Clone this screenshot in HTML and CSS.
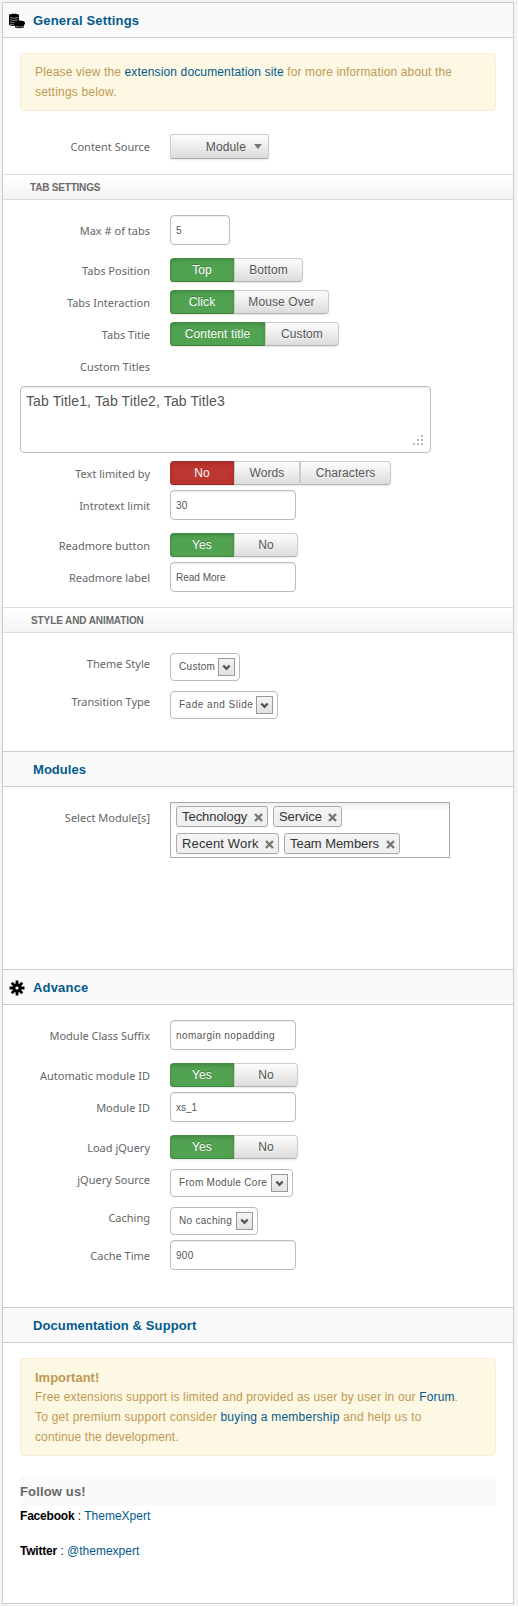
FILE: index.html
```html
<!DOCTYPE html>
<html lang="en">
<head>
<meta charset="utf-8">
<title>Module Settings</title>
<link rel="stylesheet" href="styles.css">
</head>
<body>
<svg class="defs" width="0" height="0">
  <symbol id="arrow" viewBox="0 0 15 16"><path d="M4.300 6.500l3.200 3.300 3.200-3.300" fill="none" stroke="#555" stroke-width="2.300"/></symbol>
  <symbol id="cross" viewBox="0 0 9 9"><path d="M1 1l7 7M8 1L1 8" fill="none" stroke="#777" stroke-width="2.400"/></symbol>
</svg>
<main class="panel">
  <h3 class="head">
    <svg class="head-icon" viewBox="0 0 16 16"><path d="M0 2.200C0 .2 10 .2 10 2.200V8Q6 8.600 5.500 10.500V13C2 13 0 12.300 0 11.500z"/><path d="M6 9.500Q7 7.500 11 7.500T16 9.500V11.500H15V14.500Q10.500 16 6 14.500V13L5 12V10.500z"/><path d="M1 4.500q3.500 1.500 8.500 0M1 6.800q3.500 1.300 8 0M1 9q2.500 1 4.500.5M1 11.200q2.500 1 4 .3M6.500 13.300q4.500 1.500 8.500 0" fill="none" stroke="#aaa" stroke-width=".8"/></svg>
    <span class="t-general">General Settings</span>
  </h3>
  <section class="body body-general">
    <div class="alert"><p class="a1">Please view the <a>extension documentation site</a> for more information about the</p><p class="a2">settings below.</p></div>
    <div class="row row-source"><label>Content Source</label><div class="drop"><span>Module</span><i class="caret"></i></div></div>
  </section>
  <h4 class="sub sub-tab"><span>TAB SETTINGS</span></h4>
  <section class="body body-tabs">
    <div class="row row-input"><label>Max # of tabs</label><div class="input small">5</div></div>
    <div class="row row-btn"><label>Tabs Position</label><div class="group"><b class="btn on">Top</b><b class="btn w69">Bottom</b></div></div>
    <div class="row row-btn"><label>Tabs Interaction</label><div class="group"><b class="btn on">Click</b><b class="btn w95">Mouse Over</b></div></div>
    <div class="row row-btn"><label>Tabs Title</label><div class="group"><b class="btn on w95">Content title</b><b class="btn w74">Custom</b></div></div>
    <div class="row row-btn"><label>Custom Titles</label></div>
    <div class="area"><span>Tab Title1, Tab Title2, Tab Title3</span>
      <svg class="grip" viewBox="0 0 10 10"><path d="M8 0h2v2H8zM4 4h2v2H4zM8 4h2v2H8zM0 8h2v2H0zM4 8h2v2H4zM8 8h2v2H8z" fill="#b5b5b5"/></svg></div>
    <div class="row row-btn"><label>Text limited by</label><div class="group"><b class="btn off">No</b><b class="btn w66">Words</b><b class="btn w91">Characters</b></div></div>
    <div class="row row-input"><label>Introtext limit</label><div class="input">30</div></div>
    <div class="row row-btn"><label>Readmore button</label><div class="group"><b class="btn on">Yes</b><b class="btn">No</b></div></div>
    <div class="row row-input"><label>Readmore label</label><div class="input t-read">Read More</div></div>
  </section>
  <h4 class="sub sub-style"><span>STYLE AND ANIMATION</span></h4>
  <section class="body body-style">
    <div class="row row-select"><label>Theme Style</label><div class="select"><span>Custom</span><svg><use href="#arrow"/></svg></div></div>
    <div class="row row-select"><label>Transition Type</label><div class="select w108 t-fade"><span>Fade and Slide</span><svg><use href="#arrow"/></svg></div></div>
  </section>
  <h3 class="head line"><span class="t-modules">Modules</span></h3>
  <section class="body body-modules">
    <div class="row row-input"><label class="l-select">Select Module[s]</label>
      <div class="chosen">
        <span class="chip w92"><span>Technology</span><svg><use href="#cross"/></svg></span>
        <span class="chip w69"><span>Service</span><svg><use href="#cross"/></svg></span>
        <span class="chip w103"><span class="t-recent">Recent Work</span><svg><use href="#cross"/></svg></span>
        <span class="chip w116"><span>Team Members</span><svg><use href="#cross"/></svg></span>
      </div></div>
  </section>
  <h3 class="head line">
    <svg class="head-icon" viewBox="0 0 16 16"><path d="M8 .5v15M.5 8h15M2.700 2.700l10.600 10.600M13.300 2.700L2.700 13.300" stroke="#000" stroke-width="2.800"/><circle cx="8" cy="8" r="4.500"/><circle cx="8" cy="8" r="1.600" fill="#fafafa"/></svg>
    <span class="t-advance">Advance</span>
  </h3>
  <section class="body body-advance">
    <div class="row row-input"><label>Module Class Suffix</label><div class="input t-suffix">nomargin nopadding</div></div>
    <div class="row row-btn"><label>Automatic module ID</label><div class="group"><b class="btn on">Yes</b><b class="btn">No</b></div></div>
    <div class="row row-input"><label>Module ID</label><div class="input t-read">xs_1</div></div>
    <div class="row row-btn"><label>Load jQuery</label><div class="group"><b class="btn on">Yes</b><b class="btn">No</b></div></div>
    <div class="row row-select"><label>jQuery Source</label><div class="select w123"><span>From Module Core</span><svg><use href="#arrow"/></svg></div></div>
    <div class="row row-select"><label>Caching</label><div class="select w88"><span>No caching</span><svg><use href="#arrow"/></svg></div></div>
    <div class="row row-input"><label>Cache Time</label><div class="input">900</div></div>
  </section>
  <h3 class="head line"><span class="t-doc">Documentation &amp; Support</span></h3>
  <section class="body body-doc">
    <div class="alert alert-doc"><h5>Important!</h5><p class="a3">Free extensions support is limited and provided as user by user in our <a>Forum</a>.</p><p class="a4">To get premium support consider <a>buying a membership</a> and help us to</p><p class="a5">continue the development.</p></div>
    <h4 class="follow">Follow us!</h4>
    <p class="social"><strong>Facebook</strong> : <a>ThemeXpert</a></p>
    <p class="social"><strong>Twitter</strong> : <a>@themexpert</a></p>
  </section>
</main>
</body>
</html>
```
FILE: styles.css
```css
* { box-sizing: border-box; }
body { margin: 0; padding: 2px 4px 2px 2px; height: 1606px; background: #f4f4f4; font: 12px/20px "Liberation Sans", Arial, sans-serif; color: #555; white-space: nowrap; }
h3, h4, h5, p { margin: 0; }
.defs { display: block; height: 0; }
.panel { width: 512px; height: 1602px; border: 1px solid #ccc; background: #fff; }
.head { display: flex; position: relative; align-items: center; height: 35px; padding: 2px 0 0 30px; border-bottom: 1px solid #ccc; background: #fafafa; color: #025a8d; font-size: 13px; letter-spacing: .18px; }
.head.line { height: 36px; border-top: 1px solid #ccc; }
.head-icon { position: absolute; left: 6px; top: 10px; width: 16px; height: 16px; }
.t-modules { letter-spacing: .05px; }
.t-doc { letter-spacing: .1px; }
.body { padding: 0 17px; }
.body-general { height: 136px; padding-top: 15px; }
.body-tabs { height: 407px; padding-top: 15px; }
.body-style { height: 118px; padding-top: 15px; }
.body-modules { height: 182px; padding-top: 15px; }
.body-advance { height: 302px; padding-top: 15px; }
.body-doc { padding-top: 15px; }
.alert { height: 58px; padding: 8px 14px; border: 1px solid #fbeed5; border-radius: 4px; background: #fcf8e3; color: #c09853; }
.alert a { color: #025a8d; }
.a1 { letter-spacing: .135px; }
.a2 { letter-spacing: .2px; }
.a3 { letter-spacing: .15px; }
.a4 { letter-spacing: .23px; }
.a5 { letter-spacing: .12px; }
.alert-doc { height: 98px; }
.alert-doc h5 { font-size: 13px; line-height: 21px; margin-bottom: -1px; }
.row { display: grid; grid-template-columns: 130px 1fr; column-gap: 20px; align-items: start; }
.row label { text-align: right; font: 11px/20px "Noto Sans", "Open Sans", sans-serif; color: #666; }
.row-source { margin-top: 23px; }
.row-source label { padding-top: 3px; }
.row-input { margin-bottom: 10px; }
.row-input label { padding-top: 6px; }
.row-btn { padding: 3px 0 5px; }
.row-btn label { height: 24px; padding-top: 3px; }
.row-select { padding: 5px 0; }
.row-select label { padding-top: 1px; }
.drop { display: flex; align-items: center; justify-content: flex-end; gap: 8px; width: 99px; height: 25px; padding-right: 6px; border: 1px solid #ccc; border-bottom-color: #aaa; border-radius: 2px; background: linear-gradient(#fdfdfd, #dcdcdc); box-shadow: 0 1px 2px rgba(0,0,0,.1); letter-spacing: .15px; }
.caret { border: 4px solid transparent; border-top: 5px solid #777; border-bottom: 0; }
.sub { display: flex; align-items: center; height: 26px; padding: 1px 0 0 27px; border: solid #ddd; border-width: 1px 0; background: linear-gradient(#fff, #f4f4f4); color: #6a6a6a; font-size: 10px; letter-spacing: -.2px; }
.sub-style { padding-left: 28px; letter-spacing: -.1px; }
.input { width: 126px; height: 30px; padding-left: 5px; border: 1px solid #bbb; border-radius: 4px; background: #fff; box-shadow: inset 0 1px 1px rgba(0,0,0,.075); font-size: 10px; line-height: 30px; letter-spacing: .3px; }
.t-read { letter-spacing: 0; }
.t-suffix { letter-spacing: .43px; }
.input.small { width: 60px; }
.group { display: flex; border-radius: 4px; width: max-content; box-shadow: 0 1px 2px rgba(0,0,0,.1); }
.btn { width: 64px; height: 24px; border: 1px solid #ccc; border-bottom-color: #b3b3b3; border-left-width: 0; background: linear-gradient(#fdfdfd, #dcdcdc); font-weight: normal; font-size: 12px; line-height: 23px; text-align: center; text-shadow: 0 1px 1px rgba(255,255,255,.75); letter-spacing: .1px; }
.btn + .btn { border-left-width: 1px; }
.btn:first-child { border-radius: 4px 0 0 4px; }
.btn:last-child { border-radius: 0 4px 4px 0; }
.btn.on, .btn.off { border: 0; color: #fff; line-height: 25px; text-shadow: 0 -1px 0 rgba(0,0,0,.25); }
.btn.on { background: #51a351; box-shadow: inset 0 2px 4px rgba(0,0,0,.2), inset 0 -1px #3c8a3c; }
.btn.off { background: #bd362f; box-shadow: inset 0 2px 4px rgba(0,0,0,.2), inset 0 -1px #982a25; }
.area { position: relative; width: 411px; height: 67px; margin: 3px 0 5px; padding: 4px 5px; border: 1px solid #bbb; border-radius: 4px; box-shadow: inset 0 1px 1px rgba(0,0,0,.075); font-size: 14px; letter-spacing: .12px; }
.grip { position: absolute; right: 7px; bottom: 7px; width: 10px; height: 10px; }
.select { display: flex; align-items: center; justify-content: space-between; width: 70px; height: 28px; padding: 0 4px 0 8px; border: 1px solid #bbb; border-radius: 4px; font-size: 10px; letter-spacing: .3px; }
.t-fade { letter-spacing: .5px; }
.select svg { width: 17px; height: 18px; border: 1px solid #999; background: linear-gradient(#f4f4f4, #e2e2e2); }
.chosen { display: flex; flex-wrap: wrap; align-content: flex-start; gap: 6px 5px; width: 280px; height: 56px; padding: 3px 30px 3px 5px; border: 1px solid #aaa; background: linear-gradient(#eee, #fff 8px); }
.chip { display: flex; align-items: center; justify-content: space-between; height: 21px; padding: 0 4px 0 5px; border: 1px solid #aaa; border-radius: 3px; background: linear-gradient(#f4f4f4, #eee); box-shadow: 0 1px 1px rgba(0,0,0,.05); color: #333; font-size: 13px; letter-spacing: -.05px; }
.t-recent { letter-spacing: .15px; }
.chip svg { width: 9px; height: 9px; margin-top: 1px; }
.w66 { width: 66px; } .w69 { width: 69px; } .w74 { width: 74px; } .w88 { width: 88px; } .w91 { width: 91px; } .w92 { width: 92px; }
.w95 { width: 95px; } .w103 { width: 103px; } .w108 { width: 108px; } .w116 { width: 116px; } .w123 { width: 123px; }
.follow { height: 30px; margin: 20px 0 0; background: #fafafa; color: #666; font-size: 13px; line-height: 31px; letter-spacing: .15px; }
.social { height: 35px; color: #000; }
.social strong { letter-spacing: -.2px; }
.social a { color: #025a8d; }
```
